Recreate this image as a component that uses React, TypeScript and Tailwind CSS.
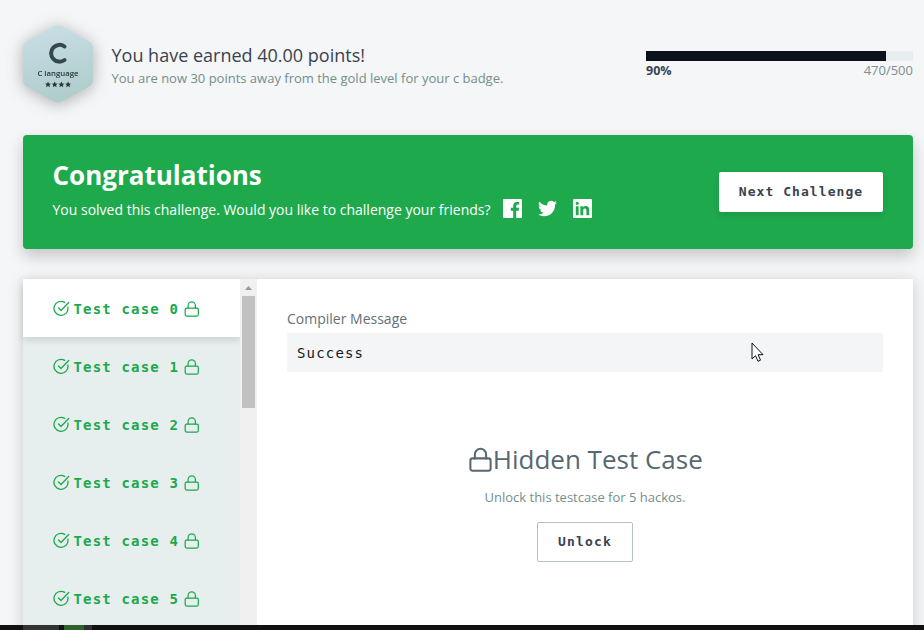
import React from "react";

const cases = [0, 1, 2, 3, 4, 5];

function Lock({ className }: { className: string }) {
  return (
    <svg viewBox="0 0 24 24" fill="none" stroke="currentColor" strokeLinecap="round" strokeLinejoin="round" className={className}>
      <rect x="3" y="11" width="18" height="11" rx="2" />
      <path d="M7 11V7.500a5 5 0 0 1 10 0v3.500" />
    </svg>
  );
}

function CheckCircle() {
  return (
    <svg viewBox="0 0 17 17" fill="none" stroke="currentColor" strokeWidth="1.300" strokeLinecap="round" strokeLinejoin="round" className="mb-[2px] h-[17px] w-[17px] shrink-0">
      <path d="M14.900 7.200A7 7 0 1 1 11.700 2.400" />
      <path d="M15.700 2.500 8 10.500 5.500 8" />
    </svg>
  );
}

function Badge() {
  return (
    <svg viewBox="0 0 70 78" className="mt-[25px] h-[78px] w-[70px] shrink-0 overflow-visible drop-shadow-[0_2px_8px_rgba(60,60,50,0.38)]">
      <defs>
        <linearGradient id="silver" x1="0" y1="0" x2="0.2" y2="1">
          <stop offset="0" stopColor="#c9dfe7" />
          <stop offset="1" stopColor="#b0cdcc" />
        </linearGradient>
      </defs>
      <path d="M31 1.5Q35-.5 39 1.5L66 16.5Q70 19 70 23V55Q70 59 66 61.5L39 76.5Q35 78.500 31 76.5L4 61.500Q0 59 0 55V23Q0 19 4 16.5Z" fill="url(#silver)" />
      <path d="M41.500 21.500A8.400 8.400 0 1 0 41.500 35" fill="none" stroke="#37474f" strokeWidth="4" strokeLinecap="round" />
      <text x="35" y="50.500" textAnchor="middle" fontFamily="Open Sans, sans-serif" fontSize="7.800" fontWeight="600" fill="#26353d">C language</text>
      {[25, 31.700, 38.400, 45.100].map((x) => (
        <path key={x} transform={`translate(${x} 59.500)`} d="M0-3 .9-1 3-.8 1.400.6 1.900 2.700 0 1.600-1.900 2.700-1.400.6-3-.8-.9-1Z" fill="#26353d" />
      ))}
    </svg>
  );
}

function Header() {
  return (
    <header className="flex h-[135px] shrink-0">
      <Badge />
      <div className="ml-[18.500px] mt-[43px] flex-1 whitespace-nowrap">
        <h1 className="text-[18px] leading-[25px] text-[#39424e]">You have earned 40.00 points!</h1>
        <p className="text-[13px] leading-[20px] text-[#738f8b]">You are now 30 points away from the gold level for your c badge.</p>
      </div>
      <div className="mt-[51px] w-[267px]">
        <div className="h-[10px] bg-[#e7eeef]">
          <div className="h-full w-[240px] bg-[#0b101a]" />
        </div>
        <div className="flex justify-between text-[13px] leading-[19px]">
          <b className="text-[12.500px] text-[#39424e]">90%</b>
          <span className="text-[#7e8d93]">470/500</span>
        </div>
      </div>
    </header>
  );
}

function Banner() {
  return (
    <section className="flex h-[114px] shrink-0 items-center justify-between rounded-[4px] bg-[#1ea94c] pl-[29.500px] pr-[30px] text-white shadow-[0_7px_16px_rgba(0,0,0,0.2)]">
      <div className="whitespace-nowrap">
        <h2 className="text-[26px] font-bold leading-[36px]">Congratulations</h2>
        <div className="flex h-[34px] items-center pb-[2px]">
          <p className="text-[14px]">You solved this challenge. Would you like to challenge your friends?</p>
          <svg viewBox="0 0 19 19" className="mb-px ml-[12.500px] h-[19px] w-[19px]" fill="currentColor">
            <path d="M1 0H18Q19 0 19 1V18Q19 19 18 19H13.200V11.700H15.600L16 8.800H13.200V7Q13.200 5.600 14.600 5.600H16.100V3.100Q15.200 3 13.900 3C11.600 3 10.200 4.400 10.200 6.700V8.800H7.800V11.700H10.200V19H1Q0 19 0 18V1Q0 0 1 0Z" />
          </svg>
          <svg viewBox="0 0 24 24" className="mb-px ml-[16px] h-[19px] w-[19px]" fill="currentColor">
            <path d="M23.950 4.570a10 10 0 0 1-2.820.770 4.960 4.960 0 0 0 2.160-2.720 10 10 0 0 1-3.130 1.180 4.920 4.920 0 0 0-8.380 4.480A13.900 13.900 0 0 1 1.640 3.160a4.920 4.920 0 0 0 1.520 6.570 4.900 4.900 0 0 1-2.230-.610v.060a4.920 4.920 0 0 0 3.950 4.830 5 5 0 0 1-2.210.080 4.940 4.940 0 0 0 4.600 3.420A9.870 9.870 0 0 1 0 19.540a14 14 0 0 0 7.550 2.210c9.050 0 14-7.500 14-13.980v-.640a9.940 9.940 0 0 0 2.400-2.560Z" />
          </svg>
          <svg viewBox="0 0 19 19" className="mb-px ml-[16px] h-[19px] w-[19px]" fill="currentColor">
            <path fillRule="evenodd" d="M1 0H18Q19 0 19 1V18Q19 19 18 19H1Q0 19 0 18V1Q0 0 1 0ZM2.800 7.200V16.200H5.600V7.200ZM4.200 2.700A1.600 1.600 0 1 0 4.200 5.900 1.600 1.600 0 0 0 4.200 2.700ZM7.400 7.200V16.200H10.200V11.700C10.200 10.300 10.700 9.500 11.800 9.500S13.400 10.300 13.400 11.700V16.200H16.200V11.200C16.200 8.500 15.200 7 12.800 7 11.500 7 10.600 7.600 10.100 8.400V7.200Z" />
          </svg>
        </div>
      </div>
      <button className="h-[40px] w-[164px] rounded-[2px] bg-white font-['DejaVu_Sans_Mono',monospace] text-[13px] font-bold tracking-[1.050px] text-[#39424e] shadow-[0_3px_7px_rgba(0,0,0,0.1)]">Next Challenge</button>
    </section>
  );
}

function CaseList() {
  return (
    <nav className="w-[217px] bg-[#e6eeee]">
      {cases.map((n) => (
        <div key={n} className={`flex h-[58px] items-center pl-[30px] pt-[2px] text-[#1ba94c] ${n === 0 ? "bg-white shadow-[0_3px_7px_rgba(0,0,0,0.13)]" : ""}`}>
          <CheckCircle />
          <span className="ml-[3.500px] whitespace-nowrap font-['DejaVu_Sans_Mono',monospace] text-[14px] font-bold tracking-[1.170px]">Test case {n}</span>
          <Lock className="ml-[4px] h-[17.500px] w-[17.500px] stroke-[1.700]" />
        </div>
      ))}
    </nav>
  );
}

export default function App() {
  return (
    <main className="flex h-[630px] w-[924px] flex-col overflow-hidden bg-[#f4f6f8] font-['Open_Sans',sans-serif]">
      <div className="flex h-[625px] flex-col overflow-hidden pl-[23px] pr-[11px]">
        <Header />
        <Banner />
        <section className="mt-[30px] flex h-[370px] shrink-0 bg-white shadow-[0_2px_14px_rgba(0,0,0,0.18)]">
          <CaseList />
          <div className="flex w-[17px] flex-col items-center bg-[#f0f0f0]">
            <svg viewBox="0 0 17 17" className="h-[17px] w-[17px]"><path d="M5 11 8.500 7 12 11Z" fill="#999" /></svg>
            <div className="h-[112px] w-[13px] bg-[#c1c1c1]" />
          </div>
          <div className="flex-1 px-[30px] pt-[30px]">
            <p className="h-[24px] text-[14px] leading-[20px] text-[#666f78]">Compiler Message</p>
            <div className="flex h-[39px] items-center bg-[#f3f5f7] pl-[10px] pt-px font-['DejaVu_Sans_Mono',monospace] text-[14px] tracking-[1.170px] text-[#15191e]">Success</div>
            <div className="mt-[66px] flex flex-col items-center">
              <div className="flex h-[42px] items-center text-[#576871]">
                <Lock className="mr-[-1.500px] h-[27px] w-[27px] stroke-[1.800]" />
                <h2 className="whitespace-nowrap text-[26px]">Hidden Test Case</h2>
              </div>
              <p className="mt-[7px] text-[13px] leading-[20px] text-[#738f8b]">Unlock this testcase for 5 hackos.</p>
              <button className="mt-[15px] h-[40px] w-[96px] rounded-[2px] border border-[#b7c0c4] bg-white font-['DejaVu_Sans_Mono',monospace] text-[13px] font-bold tracking-[1.200px] text-[#39424e]">Unlock</button>
            </div>
          </div>
        </section>
      </div>
      <footer className="flex h-[5px] bg-[#111] pl-[23px]">
        <div className="w-[36px] bg-[#333]" />
        <div className="ml-[5px] w-[20px] bg-[#2f612f]" />
        <div className="w-[8px] bg-[#303030]" />
      </footer>
      <svg viewBox="0 0 13 21" className="absolute left-[751px] top-[342px] h-[21px] w-[13px]">
        <path d="M1 1V17L4.500 13.700 7 19.300 9.500 18.200 7.100 12.700H12Z" fill="white" stroke="#111" strokeWidth="1" />
      </svg>
    </main>
  );
}
